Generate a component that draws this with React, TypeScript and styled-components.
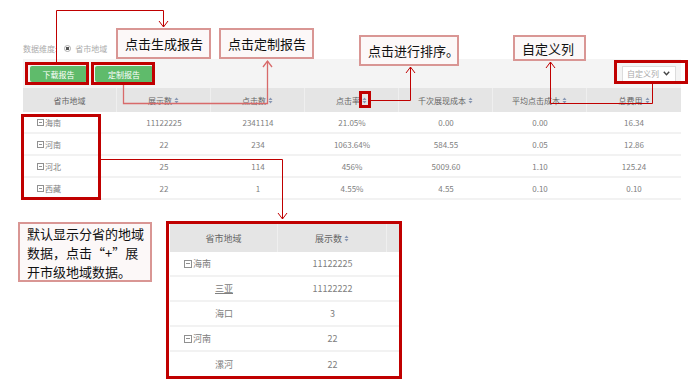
import React from "react";
import styled, { createGlobalStyle } from "styled-components";

const GlobalStyle = createGlobalStyle`
  html, body {
    margin: 0;
    padding: 0;
    background: #fff;
  }
`;

const RED = "#c00000";
const PINK = "#d86a6a";

const headers = ["省市地域", "展示数", "点击数", "点击率", "千次展现成本", "平均点击成本", "总费用"];

const rows = [
  ["海南", "11122225", "2341114", "21.05%", "0.00", "0.00", "16.34"],
  ["河南", "22", "234", "1063.64%", "584.55", "0.05", "12.86"],
  ["河北", "25", "114", "456%", "5009.60", "1.10", "125.24"],
  ["西藏", "22", "1", "4.55%", "4.55", "0.10", "0.10"],
];

const detailRows = [
  { name: "海南", value: "11122225", child: false },
  { name: "三亚", value: "11122222", child: true, link: true },
  { name: "海口", value: "3", child: true },
  { name: "河南", value: "22", child: false },
  { name: "漯河", value: "22", child: true },
];

const SortIcon: React.FC = () => (
  <SortSvg width="5" height="7" viewBox="0 0 5 7">
    <path d="M0.5 3 L2.5 0.5 L4.5 3 Z" fill="#8797b3" />
    <path d="M0.5 4 L2.5 6.5 L4.5 4 Z" fill="#8797b3" />
  </SortSvg>
);

const Connectors: React.FC = () => (
  <Lines width="693" height="384" viewBox="0 0 693 384" fill="none">
    <g stroke={RED} strokeWidth="1">
      <polyline points="56.5,62 56.5,10.5 163.5,10.5 163.5,27" />
      <polyline points="159,21 163.5,27 168,21" />
      <polyline points="371,100.5 410.5,100.5 410.5,67" />
      <polyline points="406,73 410.5,67 415,73" />
      <polyline points="652.5,84 652.5,103.5 550.5,103.5 550.5,62" />
      <polyline points="546,68 550.5,62 555,68" />
      <polyline points="101,159.5 282.5,159.5 282.5,219" />
      <polyline points="278,213 282.5,219 287,213" />
    </g>
    <g stroke={PINK} strokeWidth="1.3">
      <polyline points="123.5,85 123.5,103.5 267.5,103.5 267.5,61" />
      <polyline points="263,67 267.5,61 272,67" />
    </g>
  </Lines>
);

const App: React.FC = () => {
  return (
    <Page>
      <GlobalStyle />
      <Main>
        <DimRow>
          <span>数据维度:</span>
          <Radio />
          <span>省市地域</span>
        </DimRow>
        <Toolbar>
          <GreenButton width={57}>下载报告</GreenButton>
          <GreenButton width={58}>定制报告</GreenButton>
          <Select>
            <span>自定义列</span>
            <svg width="7" height="5" viewBox="0 0 7 5">
              <polyline points="0.8,0.8 3.5,3.8 6.2,0.8" stroke="#444" strokeWidth="1.4" fill="none" />
            </svg>
          </Select>
        </Toolbar>
        <HeadRow>
          {headers.map((h, i) => (
            <HeadCell key={h}>
              {h}
              {i > 0 && <SortIcon />}
            </HeadCell>
          ))}
        </HeadRow>
        {rows.map((r) => (
          <Row key={r[0]}>
            {r.map((c, i) =>
              i === 0 ? (
                <RegionCell key={i}>
                  <Expand />
                  {c}
                </RegionCell>
              ) : (
                <Cell key={i}>{c}</Cell>
              )
            )}
          </Row>
        ))}
      </Main>

      <Bottom>
        <NoteBox>
          默认显示分省的地域
          <br />
          数据，点击“+”展
          <br />
          开市级地域数据。
        </NoteBox>
        <DetailBox>
          <DetailHead>
            <DetailHeadCell>省市地域</DetailHeadCell>
            <DetailHeadCell>
              展示数
              <SortIcon />
            </DetailHeadCell>
            <DetailHeadCell />
          </DetailHead>
          {detailRows.map((d) => (
            <DetailRow key={d.name}>
              <DetailName child={d.child} link={d.link}>
                {!d.child && <Expand big />}
                <span>{d.name}</span>
              </DetailName>
              <DetailValue>{d.value}</DetailValue>
            </DetailRow>
          ))}
        </DetailBox>
      </Bottom>

      <Callout left={116} top={28} w={95} h={31}>点击生成报告</Callout>
      <Callout left={219} top={28} w={95} h={31}>点击定制报告</Callout>
      <Callout left={359} top={35} w={100} h={31}>点击进行排序。</Callout>
      <Callout left={513} top={35} w={73} h={26}>自定义列</Callout>

      <Highlight left={25} top={62} w={64} h={23} />
      <Highlight left={91} top={62} w={64} h={23} />
      <Highlight left={21} top={114} w={80} h={86} />
      <Highlight left={359} top={91} w={12} h={17} />
      <Highlight left={614} top={60} w={74} h={24} />

      <Connectors />
    </Page>
  );
};

export default App;

const Page = styled.div`
  position: relative;
  width: 693px;
  height: 384px;
  overflow: hidden;
  background: #fff;
  font-family: "Noto Sans CJK SC", "Noto Sans", sans-serif;
`;

const Main = styled.div`
  margin-left: 23px;
  width: 658px;
  padding-top: 42px;
`;

const DimRow = styled.div`
  display: flex;
  align-items: center;
  height: 12px;
  font-size: 8px;
  color: #ababab;
  gap: 4px;
`;

const Radio = styled.span`
  display: inline-block;
  width: 5px;
  height: 5px;
  margin-left: 3px;
  border-radius: 50%;
  border: 1px solid #aaa;
  background: radial-gradient(circle, #555 0 1.5px, #fff 2px);
`;

const Toolbar = styled.div`
  margin-top: 5px;
  height: 29px;
  background: #f4f4f4;
  display: flex;
  align-items: center;
  gap: 8px;
  padding: 0 5px 0 7px;
`;

const GreenButton = styled.div<{ width: number }>`
  width: ${({ width }) => width}px;
  height: 16px;
  margin-top: 1px;
  border-radius: 2px;
  background: #5fbb6b;
  color: #fff;
  font-size: 8px;
  display: flex;
  align-items: center;
  justify-content: center;
`;

const Select = styled.div`
  margin-left: auto;
  width: 54px;
  height: 16px;
  box-sizing: border-box;
  border: 1px solid #dcdcdc;
  background: #fff;
  display: flex;
  align-items: center;
  justify-content: space-between;
  padding: 0 5px 0 4px;
  font-size: 8px;
  color: #aaa;
`;

const HeadRow = styled.div`
  display: grid;
  grid-template-columns: repeat(7, 1fr);
  height: 24px;
  background: #e5e5e5;
`;

const HeadCell = styled.div`
  display: flex;
  align-items: center;
  justify-content: center;
  gap: 1px;
  font-size: 8px;
  color: #666;
  border-right: 1px solid #efefef;
  &:last-child {
    border-right: none;
  }
`;

const SortSvg = styled.svg`
  margin-left: 1px;
`;

const Row = styled.div`
  display: grid;
  grid-template-columns: repeat(7, 1fr);
  height: 22px;
  box-sizing: border-box;
  border-bottom: 2px solid #f2f2f2;
`;

const Cell = styled.div`
  display: flex;
  align-items: center;
  justify-content: center;
  font-size: 8px;
  color: #808080;
`;

const RegionCell = styled(Cell)`
  justify-content: flex-start;
  padding-left: 14px;
  gap: 1px;
`;

const Expand = styled.span<{ big?: boolean }>`
  position: relative;
  display: inline-block;
  width: ${({ big }) => (big ? 6 : 5)}px;
  height: ${({ big }) => (big ? 6 : 5)}px;
  border: 1px solid #909090;
  &::after {
    content: "";
    position: absolute;
    left: 1px;
    right: 1px;
    top: 50%;
    height: 1px;
    margin-top: -0.5px;
    background: #909090;
  }
`;

const Bottom = styled.div`
  display: flex;
  align-items: flex-start;
  padding-left: 18px;
  margin-top: 21px;
`;

const NoteBox = styled.div`
  margin-top: 1px;
  width: 134px;
  height: 60px;
  box-sizing: border-box;
  border: 2px solid #d99694;
  background: #fcf8f8;
  padding: 0 0 0 7px;
  font-size: 13px;
  line-height: 19px;
  color: #111;
  white-space: nowrap;
`;

const DetailBox = styled.div`
  margin-left: 14px;
  width: 236px;
  height: 158px;
  box-sizing: border-box;
  border: 3px solid ${RED};
  background: #fff;
  padding: 0 0 0 1px;
`;

const DetailHead = styled.div`
  display: grid;
  grid-template-columns: 108px 109px 1fr;
  height: 28px;
  background: #e5e5e5;
`;

const DetailHeadCell = styled.div`
  display: flex;
  align-items: center;
  justify-content: center;
  gap: 1px;
  font-size: 9px;
  color: #666;
  border-right: 1px solid #efefef;
  &:last-child {
    border-right: none;
  }
`;

const DetailRow = styled.div`
  display: grid;
  grid-template-columns: 108px 109px 1fr;
  height: 25px;
  box-sizing: border-box;
  border-bottom: 2px solid #f2f2f2;
  &:last-child {
    border-bottom: none;
  }
`;

const DetailName = styled.div<{ child?: boolean; link?: boolean }>`
  display: flex;
  align-items: center;
  gap: 1px;
  padding-left: ${({ child }) => (child ? 45 : 14)}px;
  font-size: 9px;
  color: #808080;
  span {
    text-decoration: ${({ link }) => (link ? "underline" : "none")};
  }
`;

const DetailValue = styled.div`
  display: flex;
  align-items: center;
  justify-content: center;
  font-size: 9px;
  color: #808080;
`;

const Callout = styled.div<{ left: number; top: number; w: number; h: number }>`
  position: absolute;
  left: ${({ left }) => left}px;
  top: ${({ top }) => top}px;
  width: ${({ w }) => w}px;
  height: ${({ h }) => h}px;
  box-sizing: border-box;
  border: 2px solid #d99694;
  background: #fcf8f8;
  display: flex;
  align-items: center;
  padding-left: 7px;
  font-size: 13px;
  color: #111;
  white-space: nowrap;
`;

const Highlight = styled.div<{ left: number; top: number; w: number; h: number }>`
  position: absolute;
  left: ${({ left }) => left}px;
  top: ${({ top }) => top}px;
  width: ${({ w }) => w}px;
  height: ${({ h }) => h}px;
  box-sizing: border-box;
  border: 3px solid ${RED};
`;

const Lines = styled.svg`
  position: absolute;
  left: 0;
  top: 0;
  pointer-events: none;
`;
